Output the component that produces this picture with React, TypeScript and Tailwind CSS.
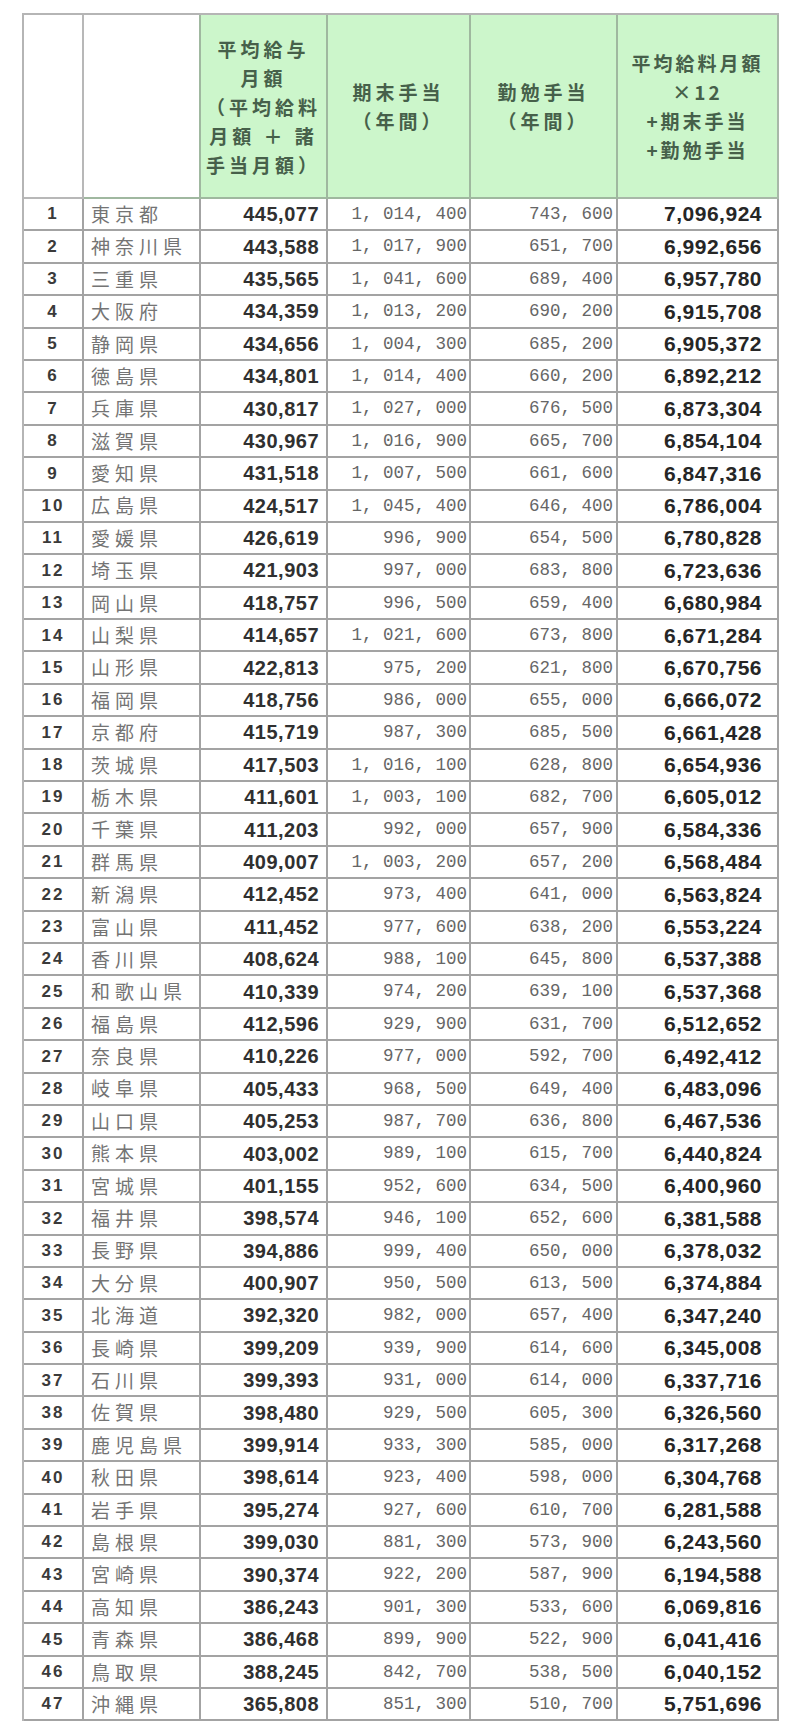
import React from 'react'

type Row = [number, string, string, string, string, string]

const rows: Row[] = [
    [1, '東京都', '445,077', '1, 014, 400', '743, 600', '7,096,924'],
    [2, '神奈川県', '443,588', '1, 017, 900', '651, 700', '6,992,656'],
    [3, '三重県', '435,565', '1, 041, 600', '689, 400', '6,957,780'],
    [4, '大阪府', '434,359', '1, 013, 200', '690, 200', '6,915,708'],
    [5, '静岡県', '434,656', '1, 004, 300', '685, 200', '6,905,372'],
    [6, '徳島県', '434,801', '1, 014, 400', '660, 200', '6,892,212'],
    [7, '兵庫県', '430,817', '1, 027, 000', '676, 500', '6,873,304'],
    [8, '滋賀県', '430,967', '1, 016, 900', '665, 700', '6,854,104'],
    [9, '愛知県', '431,518', '1, 007, 500', '661, 600', '6,847,316'],
    [10, '広島県', '424,517', '1, 045, 400', '646, 400', '6,786,004'],
    [11, '愛媛県', '426,619', '996, 900', '654, 500', '6,780,828'],
    [12, '埼玉県', '421,903', '997, 000', '683, 800', '6,723,636'],
    [13, '岡山県', '418,757', '996, 500', '659, 400', '6,680,984'],
    [14, '山梨県', '414,657', '1, 021, 600', '673, 800', '6,671,284'],
    [15, '山形県', '422,813', '975, 200', '621, 800', '6,670,756'],
    [16, '福岡県', '418,756', '986, 000', '655, 000', '6,666,072'],
    [17, '京都府', '415,719', '987, 300', '685, 500', '6,661,428'],
    [18, '茨城県', '417,503', '1, 016, 100', '628, 800', '6,654,936'],
    [19, '栃木県', '411,601', '1, 003, 100', '682, 700', '6,605,012'],
    [20, '千葉県', '411,203', '992, 000', '657, 900', '6,584,336'],
    [21, '群馬県', '409,007', '1, 003, 200', '657, 200', '6,568,484'],
    [22, '新潟県', '412,452', '973, 400', '641, 000', '6,563,824'],
    [23, '富山県', '411,452', '977, 600', '638, 200', '6,553,224'],
    [24, '香川県', '408,624', '988, 100', '645, 800', '6,537,388'],
    [25, '和歌山県', '410,339', '974, 200', '639, 100', '6,537,368'],
    [26, '福島県', '412,596', '929, 900', '631, 700', '6,512,652'],
    [27, '奈良県', '410,226', '977, 000', '592, 700', '6,492,412'],
    [28, '岐阜県', '405,433', '968, 500', '649, 400', '6,483,096'],
    [29, '山口県', '405,253', '987, 700', '636, 800', '6,467,536'],
    [30, '熊本県', '403,002', '989, 100', '615, 700', '6,440,824'],
    [31, '宮城県', '401,155', '952, 600', '634, 500', '6,400,960'],
    [32, '福井県', '398,574', '946, 100', '652, 600', '6,381,588'],
    [33, '長野県', '394,886', '999, 400', '650, 000', '6,378,032'],
    [34, '大分県', '400,907', '950, 500', '613, 500', '6,374,884'],
    [35, '北海道', '392,320', '982, 000', '657, 400', '6,347,240'],
    [36, '長崎県', '399,209', '939, 900', '614, 600', '6,345,008'],
    [37, '石川県', '399,393', '931, 000', '614, 000', '6,337,716'],
    [38, '佐賀県', '398,480', '929, 500', '605, 300', '6,326,560'],
    [39, '鹿児島県', '399,914', '933, 300', '585, 000', '6,317,268'],
    [40, '秋田県', '398,614', '923, 400', '598, 000', '6,304,768'],
    [41, '岩手県', '395,274', '927, 600', '610, 700', '6,281,588'],
    [42, '島根県', '399,030', '881, 300', '573, 900', '6,243,560'],
    [43, '宮崎県', '390,374', '922, 200', '587, 900', '6,194,588'],
    [44, '高知県', '386,243', '901, 300', '533, 600', '6,069,816'],
    [45, '青森県', '386,468', '899, 900', '522, 900', '6,041,416'],
    [46, '鳥取県', '388,245', '842, 700', '538, 500', '6,040,152'],
    [47, '沖縄県', '365,808', '851, 300', '510, 700', '5,751,696'],
]

const cell = 'border-r-2 border-b-2 border-[#a3a3a3] h-[32.4px] flex items-center overflow-hidden whitespace-nowrap'
const head = "border-r-2 border-b-2 h-[184px] flex items-center justify-center text-center font-['Noto_Sans_CJK_JP',sans-serif] font-bold text-[19px] leading-[29px] tracking-[4px] text-[#46604a]"

export default function App() {
    return (
        <div className='w-[800px] h-[1730px] bg-white pt-[13px] pl-[22px]'>
            <div className='grid grid-cols-[60px_117px_127px_143px_147px_161px] w-max border-t-2 border-l-2 border-[#b5b5b5]'>

                {/* header */}
                <div className={`${head} bg-white border-[#b8b8b8]`}></div>
                <div className={`${head} bg-white border-[#a0b8a0]`}></div>
                <div className={`${head} bg-[#ccf6cb] border-[#9fb89f]`}>
                    <div>平均給与<br />月額<br />（平均給料<br />月額 ＋ 諸<br />手当月額）</div>
                </div>
                <div className={`${head} bg-[#ccf6cb] border-[#9fb89f]`}>
                    <div>期末手当<br />（年間）</div>
                </div>
                <div className={`${head} bg-[#ccf6cb] border-[#9fb89f]`}>
                    <div>勤勉手当<br />（年間）</div>
                </div>
                <div className={`${head} bg-[#ccf6cb] border-[#a8b8a8]`}>
                    <div className='tracking-[3px]'>平均給料月額<br />×12<br />+期末手当<br />+勤勉手当</div>
                </div>

                {rows.map(([rank, pref, monthly, bonus, diligence, total]) => (
                    <React.Fragment key={rank}>
                        <div className={`${cell} justify-center font-['Liberation_Sans',sans-serif] font-bold text-[17px] tracking-[2px] text-[#3a3a3a]`}>
                            {rank}
                        </div>
                        <div className={`${cell} pl-[7px] font-['Noto_Sans_CJK_JP',sans-serif] text-[19px] tracking-[5px] text-[#747474]`}>
                            {pref}
                        </div>
                        <div className={`${cell} justify-end pr-[7px] font-['Liberation_Sans',sans-serif] font-bold text-[20px] tracking-[0.5px] text-[#303030]`}>
                            {monthly}
                        </div>
                        <div className={`${cell} justify-end pr-[2px] font-['Liberation_Mono',monospace] text-[17.5px] text-[#666]`}>
                            {bonus}
                        </div>
                        <div className={`${cell} justify-end pr-[3px] font-['Liberation_Mono',monospace] text-[17.5px] text-[#666]`}>
                            {diligence}
                        </div>
                        <div className={`${cell} justify-end pr-[15px] font-['Liberation_Sans',sans-serif] font-bold text-[21px] tracking-[0.5px] text-[#262626]`}>
                            {total}
                        </div>
                    </React.Fragment>
                ))}
            </div>
        </div>
    )
}
